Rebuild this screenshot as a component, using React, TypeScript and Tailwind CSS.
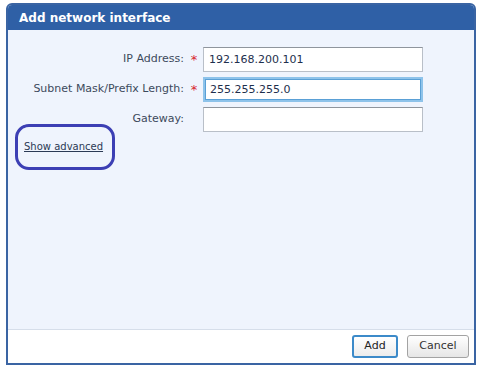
import React from 'react';

const font = { fontFamily: '"DejaVu Sans", Verdana, sans-serif' };

const Row: React.FC<{ label: string; required?: boolean; value?: string; focused?: boolean }> = ({
  label,
  required,
  value,
  focused,
}) => (
  <div className="flex items-center h-[25px]">
    <div className="w-[177px] text-right text-[11px] text-[#3d4a5c] pr-[1px]">{label}</div>
    <div className="w-[18px] text-center text-[13px] text-[#d8262e] leading-none">{required ? '*' : ''}</div>
    <input
      readOnly
      defaultValue={value}
      className={
        'w-[220px] h-[25px] px-[5px] text-[11px] text-[#1e2f4d] bg-white outline-none ' +
        (focused
          ? 'border-2 border-[#8ec3ea] shadow-[inset_0_0_0_1px_#5aa0d6]'
          : 'border border-[#b9bfc8] border-t-[#8f959d]')
      }
      style={font}
    />
  </div>
);

export default function App() {
  return (
    <div className="w-[488px] h-[390px] bg-white pt-[3px] pl-[6px]" style={font}>
      <div className="w-[470px] h-[362px] flex flex-col border-2 border-[#3a64a3] rounded-t-[6px] overflow-hidden">
        <div className="h-[25px] bg-[#2f60a6] flex items-center pl-[11px] text-[12px] font-bold text-white">
          Add network interface
        </div>
        <div className="relative flex-1 bg-[#eff4fd] pt-[17px]">
          <div className="flex flex-col gap-[5px]">
            <Row label="IP Address:" required value="192.168.200.101" />
            <Row label="Subnet Mask/Prefix Length:" required value="255.255.255.0" focused />
            <Row label="Gateway:" />
          </div>
          <div className="pl-[16px] pt-[5px] leading-[15px]">
            <a className="text-[10px] text-[#2b3a55] underline">Show advanced</a>
          </div>
          <div className="absolute left-[7px] top-[94px] w-[100px] h-[46px] border-[3px] border-[#3c3fb4] rounded-[14px]" />
        </div>
        <div className="h-[34px] bg-white border-t border-[#d6deea] flex items-center justify-end gap-[9px] pr-[5px]">
          <button className="w-[46px] h-[23px] rounded-[3px] border-2 border-[#3c8ac9] bg-gradient-to-b from-white to-[#ececec] text-[11px] text-[#222]">
            Add
          </button>
          <button className="w-[62px] h-[23px] rounded-[3px] border border-[#a3a3a3] bg-gradient-to-b from-white to-[#e6e6e6] text-[11px] text-[#333]">
            Cancel
          </button>
        </div>
      </div>
    </div>
  );
}
